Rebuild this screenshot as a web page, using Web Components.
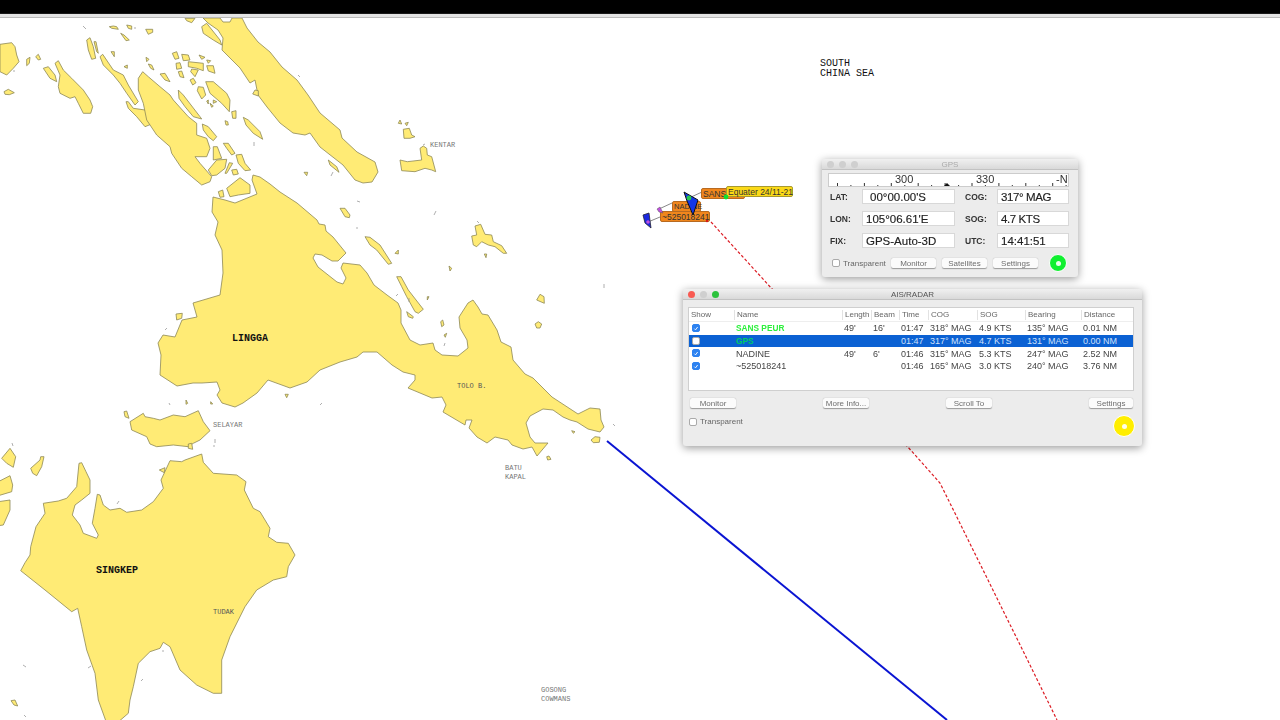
<!DOCTYPE html>
<html>
<head>
<meta charset="utf-8">
<title>Chart</title>
<style>
  html, body { margin: 0; height: 100%; background: #fff; overflow: hidden; }
  chart-app { font-family: "Liberation Sans", Arial, sans-serif; }
</style>
</head>
<body>
<chart-app>
  <chart-map></chart-map>

  <chart-label x="820" y="59" kind="sea">SOUTH</chart-label>
  <chart-label x="820" y="69" kind="sea">CHINA SEA</chart-label>
  <chart-label x="232" y="334" kind="big">LINGGA</chart-label>
  <chart-label x="96" y="566" kind="big">SINGKEP</chart-label>
  <chart-label x="430" y="141">KENTAR</chart-label>
  <chart-label x="213" y="421">SELAYAR</chart-label>
  <chart-label x="457" y="382" kind="dark">TOLO B.</chart-label>
  <chart-label x="505" y="464">BATU</chart-label>
  <chart-label x="505" y="473">KAPAL</chart-label>
  <chart-label x="213" y="608" kind="dark">TUDAK</chart-label>
  <chart-label x="541" y="686">GOSONG</chart-label>
  <chart-label x="541" y="695">COWMANS</chart-label>

  <ship-overlay></ship-overlay>

  <gps-window></gps-window>

  <ais-window>
    <ais-row checked>
      <span></span><span class="sans">SANS PEUR</span><span>49'</span><span>16'</span><span>01:47</span><span>318° MAG</span><span>4.9 KTS</span><span>135° MAG</span><span>0.01 NM</span>
    </ais-row>
    <ais-row selected>
      <span></span><span class="gps">GPS</span><span></span><span></span><span>01:47</span><span>317° MAG</span><span>4.7 KTS</span><span>131° MAG</span><span>0.00 NM</span>
    </ais-row>
    <ais-row checked>
      <span></span><span>NADINE</span><span>49'</span><span>6'</span><span>01:46</span><span>315° MAG</span><span>5.3 KTS</span><span>247° MAG</span><span>2.52 NM</span>
    </ais-row>
    <ais-row checked>
      <span></span><span>~525018241</span><span></span><span></span><span>01:46</span><span>165° MAG</span><span>3.0 KTS</span><span>240° MAG</span><span>3.76 NM</span>
    </ais-row>
  </ais-window>
</chart-app>

<script>
// land outlines, traced in zoomed crops: [offset x, offset y, scale, points]
const LAND = [
  // big islands in page coordinates
  [0, 0, 1, '253,175 260,177 270,184 280,192 297,203 317,220 319,224 325,225 326,231 333,237 346,253 338,261 332,261 322,255 315,254 313,258 318,267 337,282 343,284 346,278 341,268 343,263 360,265 367,273 374,285 387,295 398,303 401,310 401,323 410,340 420,345 433,343 435,350 442,355 458,356 468,348 467,340 460,328 459,317 468,303 473,300 478,307 482,314 488,315 497,330 501,342 511,347 513,360 525,374 533,378 552,397 578,414 590,408 600,409 601,420 604,427 600,432 588,429 577,422 570,420 563,417 553,410 543,409 530,416 526,423 530,437 535,443 548,443 537,456 532,447 523,449 512,445 508,440 495,437 487,443 477,437 469,428 472,420 466,420 465,425 443,412 446,405 442,397 432,398 408,388 415,380 415,375 403,372 392,365 377,352 363,352 357,357 340,362 320,370 307,382 290,388 268,380 257,393 243,403 235,407 222,403 217,395 220,390 217,382 202,383 193,383 177,386 160,375 161,355 158,343 163,335 175,337 182,320 197,317 193,303 220,295 223,273 222,250 215,235 218,222 212,212 213,197 225,200 235,203 257,194 252,180'],
  [0, 0, 1, '203,18 220,18 223,22 230,22 232,18 242,18 247,28 258,42 270,52 282,67 297,80 308,95 320,113 340,130 342,138 357,152 375,162 378,172 372,182 363,183 355,180 343,165 320,147 310,133 305,135 293,133 280,123 267,107 258,95 255,80 250,83 240,68 222,50 223,38 218,30 208,23'],
  // crop at 0,0
  [0, 0, 3, '0,133 35,128 45,140 50,165 57,185 40,205 20,225 0,215'],
  [0, 0, 3, '12,275 25,268 43,278 28,284 15,283'],
  [0, 0, 3, '80,178 90,172 88,190 80,197'],
  [0, 0, 3, '107,170 115,163 122,178 115,180'],
  [0, 0, 3, '130,205 145,200 165,225 170,245 150,235'],
  [0, 0, 3, '165,190 175,182 190,210 215,235 250,270 270,300 278,320 272,340 250,340 235,310 225,290 210,295 180,280 175,260 180,225'],
  [0, 0, 3, '260,120 270,113 280,140 287,175 275,178 265,150'],
  [0, 0, 3, '282,125 288,125 295,160 290,155'],
  [0, 0, 3, '300,170 308,163 340,210 370,225 385,255 415,305 405,315 380,280 360,250 340,225 310,195'],
  [0, 0, 3, '378,305 385,305 400,325 435,330 465,355 480,375 460,370 435,380 410,350 385,325'],
  [0, 0, 3, '415,235 428,215 445,230 480,260 510,285 520,300 565,350 590,370 590,405 620,415 630,445 620,470 585,470 600,490 635,530 630,545 605,555 575,530 545,505 515,460 510,440 470,405 440,360 430,310 415,270'],
  [0, 0, 3, '480,222 495,220 510,245 495,240'],
  [0, 0, 3, '535,270 550,285 600,350 605,357 580,350 555,320 537,295'],
  [0, 0, 3, '607,372 625,380 650,410 640,422 625,410 610,390'],
  [0, 0, 3, '340,78 350,80 355,88 335,85 328,80'],
  [0, 0, 3, '380,75 395,78 395,88 385,85'],
  [0, 0, 3, '362,100 372,105 388,120 378,122'],
  [0, 0, 3, '437,88 458,88 458,97 445,103'],
  [0, 0, 3, '555,55 585,55 575,68 560,62'],
  [0, 0, 3, '605,80 620,70 660,120 665,135 640,120 610,100'],
  [0, 0, 3, '517,160 530,155 537,175 525,178'],
  [0, 0, 3, '545,163 565,165 570,180 550,182'],
  [0, 0, 3, '565,185 610,190 610,212 590,205 565,200'],
  [0, 0, 3, '597,165 615,172 605,178'],
  [0, 0, 3, '620,180 632,182 625,190'],
  [0, 0, 3, '620,197 640,197 645,220 625,213'],
  [0, 0, 3, '528,190 540,188 545,205 530,208'],
  [0, 0, 3, '535,215 545,213 552,233 540,230'],
  [0, 0, 3, '575,207 595,210 585,230 572,215'],
  [0, 0, 3, '570,240 580,235 588,248 578,255'],
  [0, 0, 3, '595,260 610,262 617,285 605,297 592,272'],
  [0, 0, 3, '617,245 640,245 680,280 690,300 688,335 665,310 630,280'],
  [0, 0, 3, '620,303 625,300 625,312'],
  [0, 0, 3, '640,300 650,305 640,310'],
  [0, 0, 3, '630,310 640,318 635,322'],
  [0, 0, 3, '695,335 708,332 708,355 698,355'],
  [0, 0, 3, '730,352 745,360 780,395 788,418 760,400 738,375'],
  [0, 0, 3, '675,362 683,365 685,375 678,375'],
  [0, 0, 3, '670,430 685,430 705,460 695,465 680,445'],
  [0, 0, 3, '640,440 652,440 665,475 640,480'],
  [0, 0, 3, '708,465 725,463 735,490 752,510 735,512 715,490'],
  [0, 0, 3, '625,510 650,480 680,478 675,505 650,525 635,527'],
  [0, 0, 3, '688,488 698,490 680,520 675,520'],
  [0, 0, 3, '695,510 710,508 715,522 700,525'],
  [0, 0, 3, '680,565 720,533 750,555 750,580 715,585 690,590'],
  [0, 0, 3, '655,575 668,570 672,590 660,592'],
  [0, 0, 3, '765,270 775,272 775,288 758,282'],
  [0, 0, 3, '438,172 447,178 440,185'],
  [0, 0, 3, '445,192 455,195 462,210 452,205'],
  [0, 0, 3, '372,200 382,195 382,205'],
  [0, 0, 3, '333,155 343,155 343,170'],
  [0, 0, 3, '912,517 923,517 920,527'],
  // crop at 320,100
  [320, 100, 3, '235,70 240,60 245,72'],
  [320, 100, 3, '255,70 265,67 260,77'],
  [320, 100, 3, '250,88 268,85 275,105 285,110 270,115 252,115'],
  [320, 100, 3, '240,180 262,185 305,180 300,145 310,138 320,145 322,165 335,170 347,215 335,210 315,205 285,215 245,212'],
  [320, 100, 3, '25,180 50,200 57,217 30,195'],
  [320, 100, 3, '60,325 75,325 90,345 88,353 75,350'],
  [320, 100, 3, '135,410 150,412 180,435 215,490 205,493 170,450 150,435'],
  [320, 100, 3, '225,460 235,450 235,462'],
  [320, 100, 3, '230,530 243,530 265,570 310,628 295,640 285,635 260,590 245,560'],
  [320, 100, 3, '260,635 280,650 278,655 265,650'],
  [320, 100, 3, '465,378 482,373 495,403 515,405 520,425 545,437 560,460 550,460 525,440 505,435 485,425 470,440 460,435 455,408 470,405'],
  [320, 100, 3, '493,462 500,462 498,473'],
  [320, 100, 3, '387,498 395,505 390,513'],
  [320, 100, 3, '322,590 327,590 322,600'],
  [320, 100, 3, '362,665 368,660 372,675 365,680'],
  [320, 100, 3, '372,705 380,700 376,712'],
  [320, 100, 3, '650,600 660,583 672,590 673,610'],
  [320, 100, 3, '645,672 655,665 665,672 660,684 650,684'],
  // crop at 110,240
  [110, 240, 3, '198,222 217,220 215,235 200,240'],
  [110, 240, 3, '60,545 100,520 105,530 130,535 150,540 190,525 225,530 265,512 280,545 300,572 270,600 250,610 235,620 190,615 140,620 120,612 110,590 65,570'],
  [110, 240, 3, '235,612 245,610 248,628 235,625'],
  [110, 240, 3, '42,515 50,513 57,535 45,530'],
  [110, 240, 3, '228,480 233,490 228,493'],
  [110, 240, 3, '302,485 308,492 302,492'],
  [110, 240, 3, '525,463 535,463 530,473'],
  // crop at 0,430
  [0, 430, 3, '62,422 75,398 90,375 92,350 108,290 135,250 130,220 175,213 200,205 230,170 237,100 245,98 258,125 270,150 270,190 245,210 225,225 217,255 240,285 250,310 290,325 295,315 277,280 285,235 292,193 300,195 310,225 330,240 360,235 380,247 425,240 460,215 490,175 483,150 510,92 545,95 555,90 605,72 610,97 640,130 710,135 738,155 733,180 760,235 780,245 810,295 805,320 830,337 865,340 885,375 865,410 860,440 820,450 770,480 735,530 690,620 665,690 665,790 640,790 590,765 540,720 510,650 490,637 480,655 450,665 415,700 400,770 390,810 385,850 350,880 320,880 295,810 285,730 260,660 245,590 233,535 215,545 135,480'],
  [0, 430, 3, '5,85 30,55 47,80 40,112 20,100'],
  [0, 430, 3, '92,115 120,90 122,80 132,80 125,110 110,137 98,130'],
  [0, 430, 3, '-5,155 30,137 38,165 35,185 -5,197'],
  [0, 430, 3, '-5,215 30,210 30,240 10,285 -5,287'],
  [0, 430, 3, '33,812 45,810 53,828 42,825'],
  [0, 430, 3, '478,120 495,113 493,128'],
  // crop at 380,290
  [380, 290, 3, '633,450 645,440 660,442 658,457 640,458'],
  [380, 290, 3, '500,500 507,498 513,508 503,510'],
  [380, 290, 3, '575,422 585,425 580,430']
]

// tiny rocks, page coordinates
const SPECKS = [
  [83, 26, 86, 29], [135, 27, 135, 29], [298, 75, 300, 77], [254, 142, 254, 146], [425, 144, 423, 145],
  [436, 211, 434, 215], [477, 221, 479, 223], [357, 201, 360, 202], [357, 227, 357, 229], [604, 284, 604, 288],
  [165, 330, 167, 328], [320, 405, 322, 403], [169, 403, 170, 405], [409, 298, 409, 302], [396, 296, 398, 294],
  [445, 343, 444, 346], [613, 424, 615, 426], [215, 439, 215, 443], [214, 447, 214, 445], [12, 443, 13, 446],
  [23, 665, 26, 667], [88, 668, 91, 666], [163, 650, 163, 652], [141, 681, 143, 679], [117, 504, 119, 501],
  [24, 715, 26, 717], [14, 70, 14, 72], [333, 172, 331, 176]
]

customElements.define('chart-map',
  /**
   * The chart: land, specks and the two tracks.
   */
  class extends HTMLElement {
    constructor () {
      super()
      const polys = LAND.map(([ox, oy, s, pts]) => {
        const p = pts.split(' ').map(pair => {
          const [x, y] = pair.split(',').map(Number)
          return (ox + x / s).toFixed(1) + ',' + (oy + y / s).toFixed(1)
        }).join(' ')
        return `<polygon points="${p}"/>`
      }).join('')
      const specks = SPECKS.map(s => `<line x1="${s[0]}" y1="${s[1]}" x2="${s[2]}" y2="${s[3]}"/>`).join('')

      this.attachShadow({ mode: 'open' }).innerHTML = `
        <style>
          :host { position: absolute; left: 0; top: 18px; width: 1280px; height: 702px; display: block; }
          svg { display: block; }
          .land polygon { fill: #ffeb75; stroke: #8d8856; stroke-width: .8; stroke-linejoin: round; }
          .specks line { stroke: #999; stroke-width: .8; }
        </style>
        <svg width="1280" height="702" viewBox="0 18 1280 702">
          <g class="land">${polys}</g>
          <g class="specks">${specks}</g>
          <polyline points="607,441 947,720" fill="none" stroke="#0a14d2" stroke-width="2"/>
          <polyline points="711,222 773,290 907,446 940,483 1030,665 1057,720" fill="none" stroke="#dc1c24" stroke-width="1.2" stroke-dasharray="3 2"/>
        </svg>`
    }
  }
)

customElements.define('chart-label',
  /**
   * A place name pinned on the chart.
   */
  class extends HTMLElement {
    constructor () {
      super()
      this.attachShadow({ mode: 'open' }).innerHTML = `
        <style>
          :host {
            position: absolute;
            display: block;
            font: 7px/8px "Liberation Mono", "DejaVu Sans Mono", monospace;
            color: #777;
            white-space: nowrap;
          }
          :host([kind="dark"]) { color: #555; }
          :host([kind="sea"]) { font-size: 10px; line-height: 10px; color: #111; }
          :host([kind="big"]) { font-size: 10px; line-height: 10px; font-weight: bold; color: #111; }
        </style>
        <slot></slot>`
    }

    connectedCallback () {
      this.style.left = this.getAttribute('x') + 'px'
      this.style.top = this.getAttribute('y') + 'px'
    }
  }
)

customElements.define('ship-tag',
  /**
   * Small name tag next to a ship.
   */
  class extends HTMLElement {
    constructor () {
      super()
      this.attachShadow({ mode: 'open' }).innerHTML = `
        <style>
          :host {
            position: absolute;
            box-sizing: border-box;
            display: flex;
            align-items: center;
            padding-left: 1px;
            font: 8.5px "Liberation Sans", sans-serif;
            color: #333;
            background: #f0861c;
            border: 1px solid #b86a20;
            border-radius: 2px;
            white-space: nowrap;
          }
          :host([yellow]) { background: #fbd917; border-color: #a89a30; }
        </style>
        <slot></slot>`
    }
  }
)

const shipTemplate = document.createElement('template')
shipTemplate.innerHTML = `
<style>
  :host { position: absolute; left: 0; top: 0; width: 1280px; height: 720px; display: block; pointer-events: none; }
  svg { position: absolute; left: 0; top: 0; }
</style>
<svg width="1280" height="720">
  <path d="M648 222L660 217M659 209L672 203M689 198L702 192" stroke="#888" stroke-width="1"/>
</svg>
<ship-tag style="left:701px;top:188px;width:44px;height:11px">SANS</ship-tag>
<ship-tag yellow style="left:726px;top:186px;width:67px;height:11px">Equater 24/11-21</ship-tag>
<ship-tag style="left:672px;top:201px;width:29px;height:11px;font-size:7.5px">NADINE</ship-tag>
<ship-tag style="left:660px;top:211px;width:50px;height:11px">~525018241</ship-tag>
<svg width="1280" height="720">
  <polygon points="684,192 698,200 693,215 687,201" fill="#1436e6" stroke="#111" stroke-width="1"/>
  <circle cx="689" cy="198" r="2.4" fill="#28c850"/>
  <circle cx="726" cy="197" r="2.4" fill="#10e030"/>
  <polygon points="643,215 649,213 651,228 645,223" fill="#1a28e0" stroke="#223" stroke-width=".8"/>
  <circle cx="648" cy="222" r="1.8" fill="#c050e0"/>
  <polygon points="657,209 660,207 663,213 659,212" fill="#c050e0" stroke="#555" stroke-width=".5"/>
  <circle cx="707" cy="221" r="1.2" fill="#d81818"/>
</svg>`

customElements.define('ship-overlay',
  /**
   * Ship markers and their tags.
   */
  class extends HTMLElement {
    constructor () {
      super()
      this.attachShadow({ mode: 'open' })
        .appendChild(shipTemplate.content.cloneNode(true))
    }
  }
)

customElements.define('mac-button',
  /**
   * Small rounded push button.
   */
  class extends HTMLElement {
    constructor () {
      super()
      this.attachShadow({ mode: 'open' }).innerHTML = `
        <style>
          :host {
            display: flex;
            align-items: center;
            justify-content: center;
            box-sizing: border-box;
            width: 45px;
            height: 10px;
            background: #fbfbfb;
            border-radius: 2px;
            box-shadow: 0 .5px 1px rgba(0, 0, 0, .35);
            font-size: 8px;
            color: #6e6e6e;
          }
        </style>
        <slot></slot>`
    }
  }
)

customElements.define('mac-check',
  /**
   * Checkbox with an optional label.
   */
  class extends HTMLElement {
    constructor () {
      super()
      this.attachShadow({ mode: 'open' }).innerHTML = `
        <style>
          :host { display: flex; align-items: center; gap: 3px; font-size: 8px; color: #666; }
          #box {
            box-sizing: border-box;
            width: 8px;
            height: 8px;
            background: #fff;
            border: .5px solid #aaa;
            border-radius: 2px;
            display: flex;
          }
          :host([checked]) #box { background: #2d82f0; border-color: #2d82f0; }
          svg { display: none; }
          :host([checked]) svg { display: block; }
        </style>
        <div id="box"><svg viewBox="0 0 8 8" width="7" height="7"><path d="M1.8 4.2L3.4 5.8L6.2 2" fill="none" stroke="#fff" stroke-width="1.2"/></svg></div>
        <slot></slot>`
    }
  }
)

customElements.define('status-lamp',
  /**
   * Round status light with a white centre.
   */
  class extends HTMLElement {
    constructor () {
      super()
      this.attachShadow({ mode: 'open' }).innerHTML = `
        <style>
          :host {
            display: flex;
            align-items: center;
            justify-content: center;
            box-sizing: border-box;
            width: 20px;
            height: 20px;
            border-radius: 50%;
            background: var(--lamp, #10f030);
            border: 1px solid #fff;
          }
          #dot { width: 5px; height: 5px; border-radius: 50%; background: #fff; opacity: .9; }
        </style>
        <div id="dot"></div>`
    }
  }
)

customElements.define('mac-window',
  /**
   * Floating window with title bar and three lights.
   */
  class extends HTMLElement {
    constructor () {
      super()
      this.attachShadow({ mode: 'open' }).innerHTML = `
        <style>
          :host {
            position: absolute;
            display: flex;
            flex-direction: column;
            box-sizing: border-box;
            background: #ececec;
            border-radius: 3px;
            box-shadow: 0 2px 8px rgba(0, 0, 0, .4);
            overflow: hidden;
            filter: blur(.25px);
          }
          #bar {
            flex: none;
            box-sizing: border-box;
            height: 11px;
            display: grid;
            grid-template-columns: 1fr auto 1fr;
            align-items: center;
            background: linear-gradient(#f0f0f0, #d9d9d9);
            border-bottom: 1px solid #c2c2c2;
            font-size: 8px;
            color: #aaa;
          }
          :host([active]) #bar { color: #555; }
          #lights { display: flex; gap: 5px; padding-left: 5px; }
          #lights i { width: 7px; height: 7px; border-radius: 50%; background: #cfcfcf; }
          :host([active]) #lights i:nth-child(1) { background: #f85a52; }
          :host([active]) #lights i:nth-child(3) { background: #2cc23c; }
          #body { flex: 1; min-height: 0; }
        </style>
        <div id="bar">
          <div id="lights"><i></i><i></i><i></i></div>
          <div id="title"></div>
          <div></div>
        </div>
        <div id="body"><slot></slot></div>`
    }

    connectedCallback () {
      this.shadowRoot.querySelector('#title').textContent = this.getAttribute('title')
    }
  }
)

const gpsTemplate = document.createElement('template')
gpsTemplate.innerHTML = `
<style>
  :host { display: contents; }
  mac-window { left: 822px; top: 159px; width: 256px; height: 118px; }
  #pane { display: flex; flex-direction: column; padding: 3px 9px 0 6px; }
  #compass {
    position: relative;
    height: 14px;
    background: #fff;
    border: .5px solid #ccc;
    box-sizing: border-box;
    overflow: hidden;
    font-size: 11px;
    color: #333;
  }
  #compass svg { position: absolute; left: 0; top: 0; }
  #compass span { position: absolute; top: -1.5px; line-height: 13px; }
  #grid {
    display: grid;
    grid-template-columns: 32px 93px 42px 72px;
    grid-auto-rows: 15px;
    row-gap: 7px;
    margin: 2px 0 0 2px;
    align-items: center;
  }
  #grid b { font-size: 8.5px; color: #333; }
  #grid b.gap { padding-left: 10px; }
  #grid div {
    box-sizing: border-box;
    height: 15px;
    line-height: 15px;
    background: #fff;
    border: .5px solid #d8d8d8;
    padding-left: 3px;
    font-size: 11.5px;
    color: #222;
    -webkit-text-stroke: .15px #222;
    white-space: nowrap;
  }
  #grid div.tight { letter-spacing: -.4px; }
  #foot { display: flex; align-items: center; margin: 6px 0 0 4px; }
  mac-check { width: 59px; }
  mac-button { margin-right: 6px; }
  status-lamp { width: 18px; height: 18px; margin-left: 5px; --lamp: #10f030; }
</style>
<mac-window title="GPS">
  <div id="pane">
    <div id="compass">
      <svg width="241" height="14"><path id="ticks" stroke="#333" stroke-width="1" fill="none"/><polygon points="114,13 118,9 122,13" fill="#111"/></svg>
      <span style="left:66px">300</span>
      <span style="left:147px">330</span>
      <span style="left:227px">-N</span>
    </div>
    <div id="grid">
      <b>LAT:</b><div style="padding-left:7px">00°00.00'S</div>
      <b class="gap">COG:</b><div class="tight">317° MAG</div>
      <b>LON:</b><div>105°06.61'E</div>
      <b class="gap">SOG:</b><div class="tight">4.7 KTS</div>
      <b>FIX:</b><div>GPS-Auto-3D</div>
      <b class="gap">UTC:</b><div>14:41:51</div>
    </div>
    <div id="foot">
      <mac-check>Transparent</mac-check>
      <mac-button>Monitor</mac-button>
      <mac-button>Satellites</mac-button>
      <mac-button>Settings</mac-button>
      <status-lamp></status-lamp>
    </div>
  </div>
</mac-window>`

customElements.define('gps-window',
  /**
   * The GPS readout window.
   */
  class extends HTMLElement {
    constructor () {
      super()
      this.attachShadow({ mode: 'open' })
        .appendChild(gpsTemplate.content.cloneNode(true))

      // compass scale: a long tick every 10 degrees, short one between
      let d = ''
      for (let i = 0; i < 18; i++) {
        const x = 8.5 + i * 13.45
        d += `M${x.toFixed(1)} 13V${i % 2 ? 11 : 9}`
      }
      this.shadowRoot.querySelector('#ticks').setAttribute('d', d)
    }
  }
)

const COLUMNS = '45px 108px 29px 28px 29px 49px 48px 56px 1fr'

customElements.define('ais-row',
  /**
   * One target in the AIS list. First cell holds the checkbox.
   */
  class extends HTMLElement {
    constructor () {
      super()
      this.attachShadow({ mode: 'open' }).innerHTML = `
        <style>
          :host { display: block; position: relative; height: 12.7px; color: #444; font-size: 9px; }
          :host([selected]) { background: #0b61d3; color: #cfe0fb; }
          #cells {
            display: grid;
            grid-template-columns: ${COLUMNS};
            height: 100%;
            align-items: center;
            white-space: nowrap;
          }
          ::slotted(span) { padding-left: 2px; }
          ::slotted(.sans) { color: #2cf03c; font-weight: bold; font-size: 8.3px; }
          ::slotted(.gps) { color: #00cc66; font-weight: bold; font-size: 8.3px; }
          mac-check { position: absolute; left: 3px; top: 2px; }
        </style>
        <div id="cells"><slot></slot></div>
        <mac-check></mac-check>`
    }

    connectedCallback () {
      if (this.hasAttribute('checked')) {
        this.shadowRoot.querySelector('mac-check').setAttribute('checked', '')
      }
    }
  }
)

const aisTemplate = document.createElement('template')
aisTemplate.innerHTML = `
<style>
  :host { display: contents; }
  mac-window { left: 683px; top: 289px; width: 459px; height: 157px; }
  #pane { display: flex; flex-direction: column; padding: 7px 8px 0 5px; }
  #table { height: 84px; box-sizing: border-box; background: #fff; border: .5px solid #cfcfcf; }
  #head {
    display: grid;
    grid-template-columns: ${COLUMNS};
    box-sizing: border-box;
    height: 14px;
    align-items: center;
    font-size: 8px;
    color: #666;
    border-bottom: 1px solid #eee;
  }
  #head span { padding-left: 2px; border-left: 1px solid #e2e2e2; height: 10px; line-height: 10px; }
  #head span:first-child { border-left: 0; }
  #buttons { display: grid; grid-template-columns: 133px 123px 143px 44px; margin: 7px 0 0 2px; }
  #buttons mac-button { width: 46px; }
  #buttons mac-button:last-child { width: 44px; }
  #foot { display: flex; justify-content: space-between; align-items: flex-start; margin: 9px -1px 0 1px; }
  status-lamp { width: 22px; height: 22px; margin-top: -2px; --lamp: #ffee00; }
</style>
<mac-window title="AIS/RADAR" active>
  <div id="pane">
    <div id="table">
      <div id="head">
        <span>Show</span><span>Name</span><span>Length</span><span>Beam</span><span>Time</span><span>COG</span><span>SOG</span><span>Bearing</span><span>Distance</span>
      </div>
      <slot></slot>
    </div>
    <div id="buttons">
      <mac-button>Monitor</mac-button>
      <mac-button>More Info...</mac-button>
      <mac-button>Scroll To</mac-button>
      <mac-button>Settings</mac-button>
    </div>
    <div id="foot">
      <mac-check>Transparent</mac-check>
      <status-lamp></status-lamp>
    </div>
  </div>
</mac-window>`

customElements.define('ais-window',
  /**
   * The AIS/RADAR target list window.
   */
  class extends HTMLElement {
    constructor () {
      super()
      this.attachShadow({ mode: 'open' })
        .appendChild(aisTemplate.content.cloneNode(true))
    }
  }
)

customElements.define('chart-app',
  /**
   * Whole screen: top strip plus chart canvas.
   */
  class extends HTMLElement {
    constructor () {
      super()
      this.attachShadow({ mode: 'open' }).innerHTML = `
        <style>
          :host { position: relative; display: block; width: 1280px; height: 720px; overflow: hidden; background: #fff; }
          #strip { height: 18px; background: linear-gradient(#000 0, #000 13px, #333 14px, #e4e4e4 14px, #e4e4e4 17px, #bbb 17px); }
        </style>
        <div id="strip"></div>
        <slot></slot>`
    }
  }
)
</script>
</body>
</html>
